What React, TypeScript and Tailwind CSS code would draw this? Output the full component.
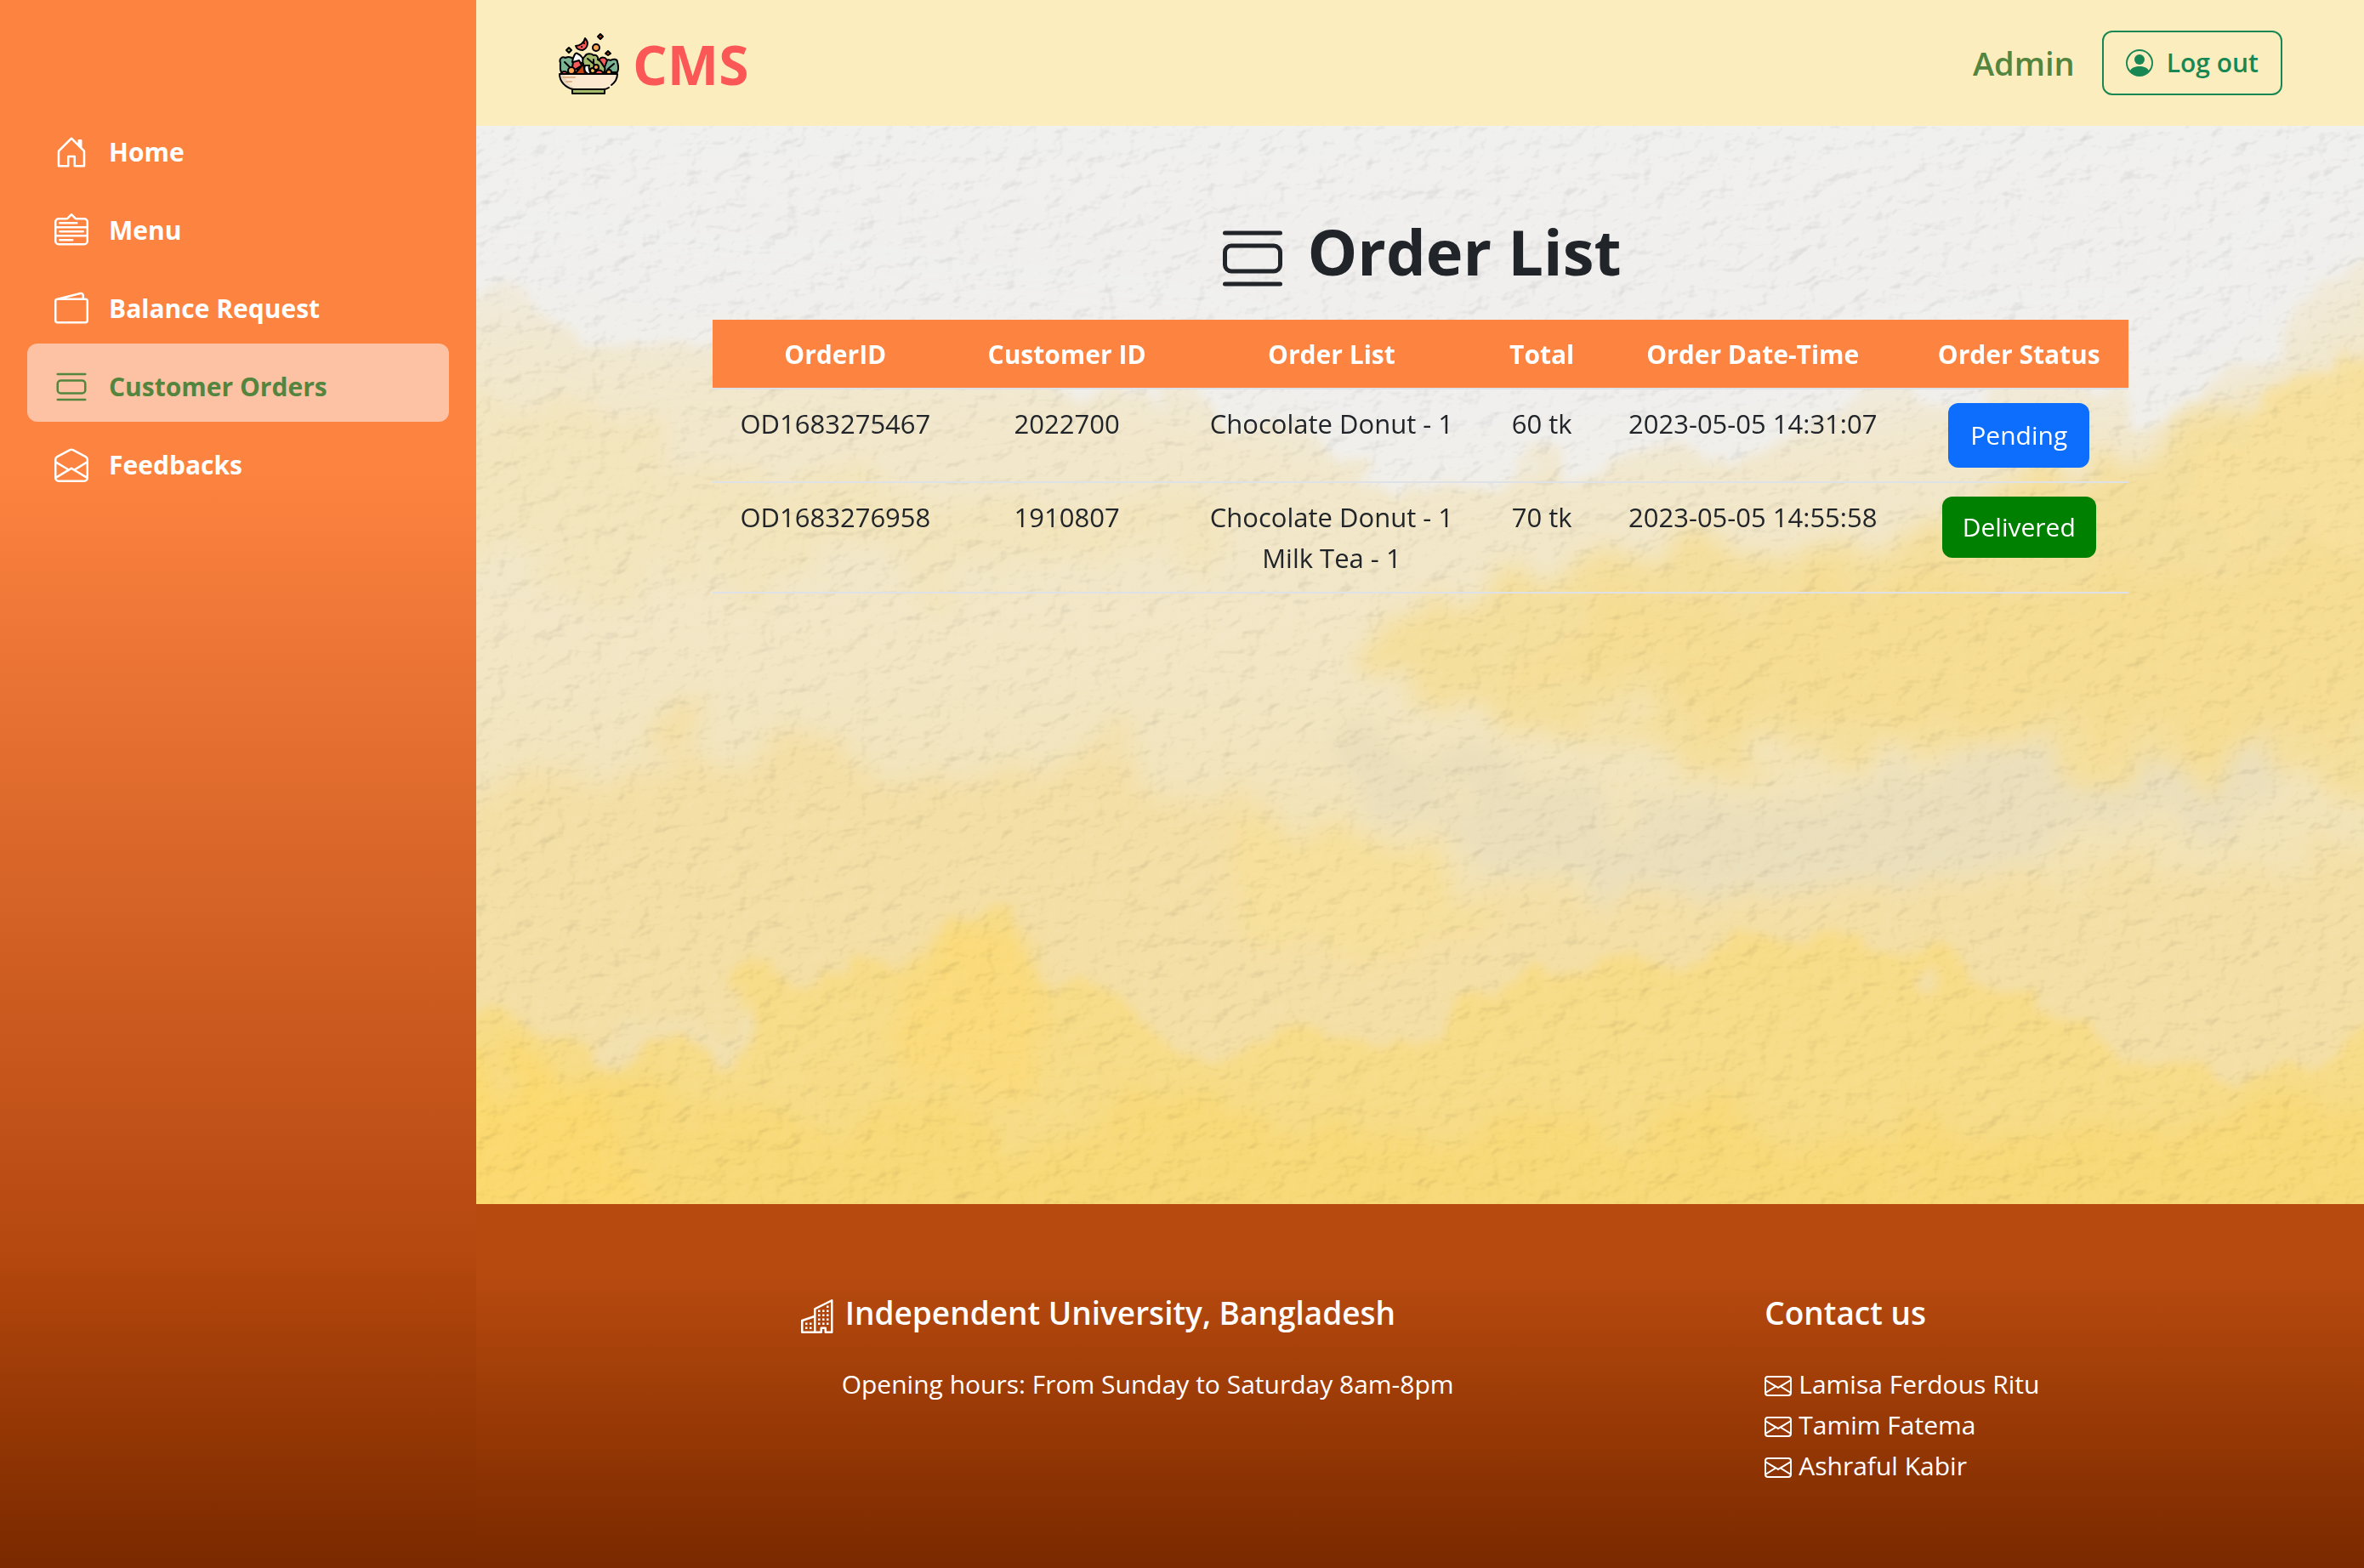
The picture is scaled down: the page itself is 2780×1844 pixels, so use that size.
import React from "react";
import {
  BsHouseDoor,
  BsMenuDown,
  BsWallet2,
  BsViewList,
  BsEnvelopeOpen,
  BsEnvelope,
  BsPersonCircle,
  BsBuildings,
} from "react-icons/bs";

const nav = [
  { label: "Home", Icon: BsHouseDoor, active: false },
  { label: "Menu", Icon: BsMenuDown, active: false },
  { label: "Balance Request", Icon: BsWallet2, active: false },
  { label: "Customer Orders", Icon: BsViewList, active: true },
  { label: "Feedbacks", Icon: BsEnvelopeOpen, active: false },
];

const orders = [
  {
    id: "OD1683275467",
    customer: "2022700",
    items: ["Chocolate Donut - 1"],
    total: "60 tk",
    time: "2023-05-05 14:31:07",
    pending: true,
  },
  {
    id: "OD1683276958",
    customer: "1910807",
    items: ["Chocolate Donut - 1", "Milk Tea - 1"],
    total: "70 tk",
    time: "2023-05-05 14:55:58",
    pending: false,
  },
];

const contacts = ["Lamisa Ferdous Ritu", "Tamim Fatema", "Ashraful Kabir"];

function SaladLogo() {
  return (
    <svg viewBox="0 0 72 74" className="h-[74px] w-[72px]" aria-hidden="true">
      <g stroke="#000" strokeWidth="2" strokeLinejoin="round" strokeLinecap="round">
        <path d="M4 48C2 44 3 40 3 37C1 32 5 29 9 31C13 29 17 31 19 33L24 48Z" fill="#7ab394" />
        <path d="M70 48C72 43 71 39 70 36C70 32 65 32 62 34C59 32 56 34 56 38L52 48Z" fill="#7ab394" />
        <path d="M8 36L15 43M66 38L59 44" fill="none" />
        <path d="M17 36C18 29 21 24 23 26C28 28 31 33 30 37Z" fill="#fff" />
        <path d="M48 34C51 29 56 30 58 34L55 42L48 41Z" fill="#fb5a5a" />
        <path d="M31 42C28 36 29 31 32 29C34 25 40 26 42 28C46 27 48 31 47 33C52 35 52 39 54 41C57 44 55 48 52 49L36 48Z" fill="#a3bb6b" />
        <path d="M35 32L48 43M42 38V33" fill="none" />
        <path d="M18 36L25 34L28 40L20 45L17 42Z" fill="#fb5a5a" />
        <path d="M20 50L30 38L32 50Z" fill="#c6410f" />
        <path d="M32 40C30 46 33 51 39 50C37 47 36 42 37 40Z" fill="#fff" />
        <circle cx="41" cy="46" r="3" fill="#fdc453" />
        <circle cx="45" cy="42" r="3" fill="#fda450" />
        <circle cx="16" cy="46" r="4" fill="#fda450" />
        <path d="M4 50C5 46 10 46 12 50ZM44 50C45 44 51 44 54 50Z" fill="#fb5a5a" />
        <circle cx="60" cy="48" r="3" fill="#fda450" />
        <path d="M2 50H70C70 59 62 68 54 68H18C9 66 2 59 2 50Z" fill="#fbe8cf" stroke="none" />
        <path d="M3 51C4 59 11 67 18 68H24C14 65 9 58 8 51Z" fill="#ead8c0" stroke="none" />
        <path d="M6 54H20M10 59H16" stroke="#e2b48c" fill="none" />
        <path d="M60 66C57 68 55 68 53 68H18C9 66 2 59 2 50H70C70 56 67 60 63 63" fill="none" />
        <path d="M17 68H55V73H17Z" fill="#a3bb6b" />
        <path d="M21 17C25 17 31 14 32 8C37 13 35 20 29 22C25 22 22 20 21 17Z" fill="#fb5a5a" />
        <path d="M28 18H28.1M31 14H31.1" />
        <circle cx="45" cy="19" r="4" fill="#fda450" />
        <path d="M50 3L53 6L50 9L47 6Z" fill="#c6410f" />
        <path d="M13 19L16 22L13 25L10 22Z" fill="#a3bb6b" />
        <path d="M59 23L62 26L59 28L56 26Z" fill="#c6410f" />
      </g>
    </svg>
  );
}

/* Watercolour wash on textured paper, drawn behind the order list. */
function PaperBackdrop() {
  return (
    <svg
      className="absolute inset-0 -z-10 h-full w-full"
      viewBox="0 0 2220 1268"
      preserveAspectRatio="none"
      aria-hidden="true"
    >
      <defs>
        <linearGradient id="wash" x1="0" y1="0" x2="0" y2="1">
          <stop offset="0" stopColor="#f1e9d4" />
          <stop offset="0.5" stopColor="#f2e6c4" />
          <stop offset="1" stopColor="#f4dd98" />
        </linearGradient>
        <filter id="edge" x="-5%" y="-5%" width="110%" height="110%">
          <feTurbulence type="fractalNoise" baseFrequency="0.011" numOctaves="6" seed="4" />
          <feDisplacementMap in="SourceGraphic" scale="150" xChannelSelector="R" yChannelSelector="G" />
          <feGaussianBlur stdDeviation="6" />
        </filter>
        <filter id="soft" x="-10%" y="-20%" width="120%" height="140%">
          <feTurbulence type="fractalNoise" baseFrequency="0.01" numOctaves="6" seed="9" />
          <feDisplacementMap in="SourceGraphic" scale="180" xChannelSelector="R" yChannelSelector="G" />
          <feGaussianBlur stdDeviation="13" />
        </filter>
        <filter id="mist" x="-10%" y="-20%" width="120%" height="140%">
          <feGaussianBlur stdDeviation="45" />
        </filter>
        <filter id="grain" x="0" y="0" width="100%" height="100%" colorInterpolationFilters="sRGB">
          <feTurbulence type="fractalNoise" baseFrequency="0.035 0.05" numOctaves="3" seed="2" />
          <feDiffuseLighting lightingColor="#ffffff" surfaceScale="5" diffuseConstant="0.62">
            <feDistantLight azimuth="215" elevation="58" />
          </feDiffuseLighting>
        </filter>
      </defs>
      <rect width="2220" height="1268" fill="url(#wash)" />
      <g filter="url(#soft)">
        <path d="M1000 640C1080 520 1300 500 1540 510C1800 440 2000 360 2320 260V780C1900 760 1750 740 1500 740C1300 690 1100 720 1000 640Z" fill="#f5df9c" />
        <path d="M1250 620C1500 520 1900 560 2320 480V700C1900 720 1500 720 1250 620Z" fill="#f6dd92" />
        <path d="M-60 320C120 330 200 350 300 410C500 430 700 440 900 470C700 540 300 500 -60 520Z" fill="#f3e5bb" />
        <path d="M-40 800C100 760 140 730 240 720C500 720 640 760 780 750C900 800 1000 800 1100 880C1300 920 1500 890 1700 880C1900 900 2100 840 2320 860V1160H-60Z" fill="#f4dfa5" />
        <path d="M860 840C960 790 1080 860 1180 930C1100 990 900 960 860 840Z" fill="#f7e09a" />
        <path d="M1020 740C1200 730 1400 820 1640 780C1800 740 2000 770 2120 720L2100 800C1900 840 1700 900 1420 900C1200 880 1100 850 1020 740Z" fill="#ebdfbb" />
      </g>
      <path
        d="M-100 -100H2320V120C2200 160 2130 190 2110 250C2060 310 1980 300 1930 300C1800 280 1500 370 1320 370C1240 340 1200 400 1080 390C920 320 820 270 560 270C460 240 330 230 220 240C120 190 60 210 -100 200Z"
        fill="#f0eff0"
        filter="url(#mist)"
        className="opacity-70"
      />
      <g filter="url(#edge)">
        <path
          d="M-100 -100H2320V130C2200 160 2130 190 2110 270C2060 330 1980 320 1930 320C1800 300 1700 310 1560 350C1500 430 1400 410 1320 410C1240 370 1200 440 1080 420C1040 340 980 410 920 350C860 330 820 310 700 290L560 290C460 260 330 250 220 250C120 210 60 230 -100 220Z"
          fill="#f0f0f0"
          className="opacity-80"
        />
        <path d="M2320 130C2220 200 2200 300 2120 330C2060 380 2040 440 1960 440L2320 520Z" fill="#f7e09a" className="opacity-80" />
        <path
          d="M-100 1030C60 1040 120 1070 200 1060C330 1050 400 970 520 970C580 900 680 950 720 1030C800 1090 900 1090 1000 1070C1200 1060 1260 970 1420 960C1620 940 1760 990 1860 1060C1980 1130 2120 1120 2320 1080V1400H-100Z"
          fill="#f7dc87"
        />
        <path d="M150 1060C190 1040 260 1030 330 1050C280 1090 220 1100 150 1110Z" fill="#f2e0ad" />
      </g>
      <g filter="url(#soft)">
        <path d="M-100 1160C300 1130 500 1190 800 1170C1300 1150 1600 1220 2320 1160V1400H-100Z" fill="#f8d977" />
        <path d="M480 1010C560 950 640 970 690 1040C720 1120 600 1140 500 1140Z" fill="#fada79" />
        <path d="M-60 1080C60 1080 160 1150 240 1400H-100Z" fill="#fbd96e" />
      </g>
      <rect width="2220" height="1268" filter="url(#grain)" className="opacity-15 mix-blend-hard-light" />
    </svg>
  );
}

export default function App() {
  return (
    <div className="flex min-h-screen font-['Open_Sans','Noto_Sans',sans-serif] text-[30px] leading-[48px] text-[#212529]">
      <aside className="w-[560px] shrink-0 bg-linear-to-b from-[#fd8340] from-30% via-[#b5480e] via-80% to-[#7a2900] px-8 pt-32">
        <nav aria-label="Main">
          <ul>
            {nav.map(({ label, Icon, active }) => (
              <li key={label}>
                <a
                  href="#"
                  aria-current={active ? "page" : undefined}
                  className={
                    active
                      ? "flex items-center gap-6 rounded-xl bg-[#fcc2a3] px-8 pt-[27px] pb-[17px] font-bold text-[#54853f]"
                      : "flex items-center gap-6 rounded-xl px-8 pt-[27px] pb-[17px] font-bold text-white"
                  }
                >
                  <Icon className="size-10" />
                  {label}
                </a>
              </li>
            ))}
          </ul>
        </nav>
      </aside>

      <div className="flex min-w-0 grow flex-col">
        <header className="flex h-[148px] items-center justify-between bg-[#fcedbf] px-24">
          <a href="#" className="flex items-center gap-4">
            <SaladLogo />
            <span className="pt-1 text-[64px] leading-none font-bold text-[#fc5757]">CMS</span>
          </a>
          <div className="flex items-center gap-8">
            <span className="text-[38px] font-semibold text-[#54853f]">Admin</span>
            <button
              type="button"
              className="flex h-[76px] items-center gap-4 rounded-xl border-2 border-[#198754] px-[26px] font-semibold text-[#198754]"
            >
              <BsPersonCircle className="size-8" />
              Log out
            </button>
          </div>
        </header>

        <main className="relative isolate grow overflow-hidden pt-[100px]">
          <PaperBackdrop />
          <h1 className="flex items-end justify-center gap-6 text-[74px] leading-[96px] font-bold">
            <BsViewList className="size-20" />
            Order List
          </h1>
          <table className="mx-auto mt-8 w-3/4 table-fixed text-center">
            <colgroup>
              <col className="w-[17.4%]" />
              <col className="w-[15.3%]" />
              <col className="w-[22.1%]" />
              <col className="w-[7.6%]" />
              <col className="w-[22.2%]" />
              <col className="w-[15.4%]" />
            </colgroup>
            <thead>
              <tr className="border-b-2 border-[#dee2e6] bg-[#fd8340] text-white">
                {["OrderID", "Customer ID", "Order List", "Total", "Order Date-Time", "Order Status"].map((h) => (
                  <th key={h} scope="col" className="pt-[17px] pb-[15px] font-bold whitespace-nowrap">
                    {h}
                  </th>
                ))}
              </tr>
            </thead>
            <tbody className="text-[31px]">
              {orders.map((o) => (
                <tr key={o.id} className="border-b-2 border-[#dee2e6] align-top">
                  <td className="py-4">{o.id}</td>
                  <td className="py-4">{o.customer}</td>
                  <td className="py-4">
                    {o.items.map((i) => (
                      <div key={i}>{i}</div>
                    ))}
                  </td>
                  <td className="py-4 whitespace-nowrap">{o.total}</td>
                  <td className="py-4 whitespace-nowrap">{o.time}</td>
                  <td className="py-4 text-[30px]">
                    {o.pending ? (
                      <button type="button" className="mx-auto block h-[76px] rounded-xl bg-[#0d6efd] px-[26px] text-white">
                        Pending
                      </button>
                    ) : (
                      <span className="mx-auto flex h-[72px] w-fit items-center rounded-xl bg-[#008000] px-6 text-white">
                        Delivered
                      </span>
                    )}
                  </td>
                </tr>
              ))}
            </tbody>
          </table>
        </main>

        <footer className="flex h-[428px] justify-evenly bg-linear-to-b from-[#b74a0f] from-20% to-[#7a2900] px-4 pt-[104px] text-white">
          <section>
            <h2 className="flex items-end gap-3 text-[37px] font-semibold">
              <BsBuildings className="size-10" />
              Independent University, Bangladesh
            </h2>
            <p className="mt-9 pl-12">Opening hours: From Sunday to Saturday 8am-8pm</p>
          </section>
          <section>
            <h2 className="text-[37px] font-semibold">Contact us</h2>
            <ul className="mt-9">
              {contacts.map((c) => (
                <li key={c} className="flex items-center gap-2">
                  <BsEnvelope className="mt-1 size-8" />
                  {c}
                </li>
              ))}
            </ul>
          </section>
        </footer>
      </div>
    </div>
  );
}
